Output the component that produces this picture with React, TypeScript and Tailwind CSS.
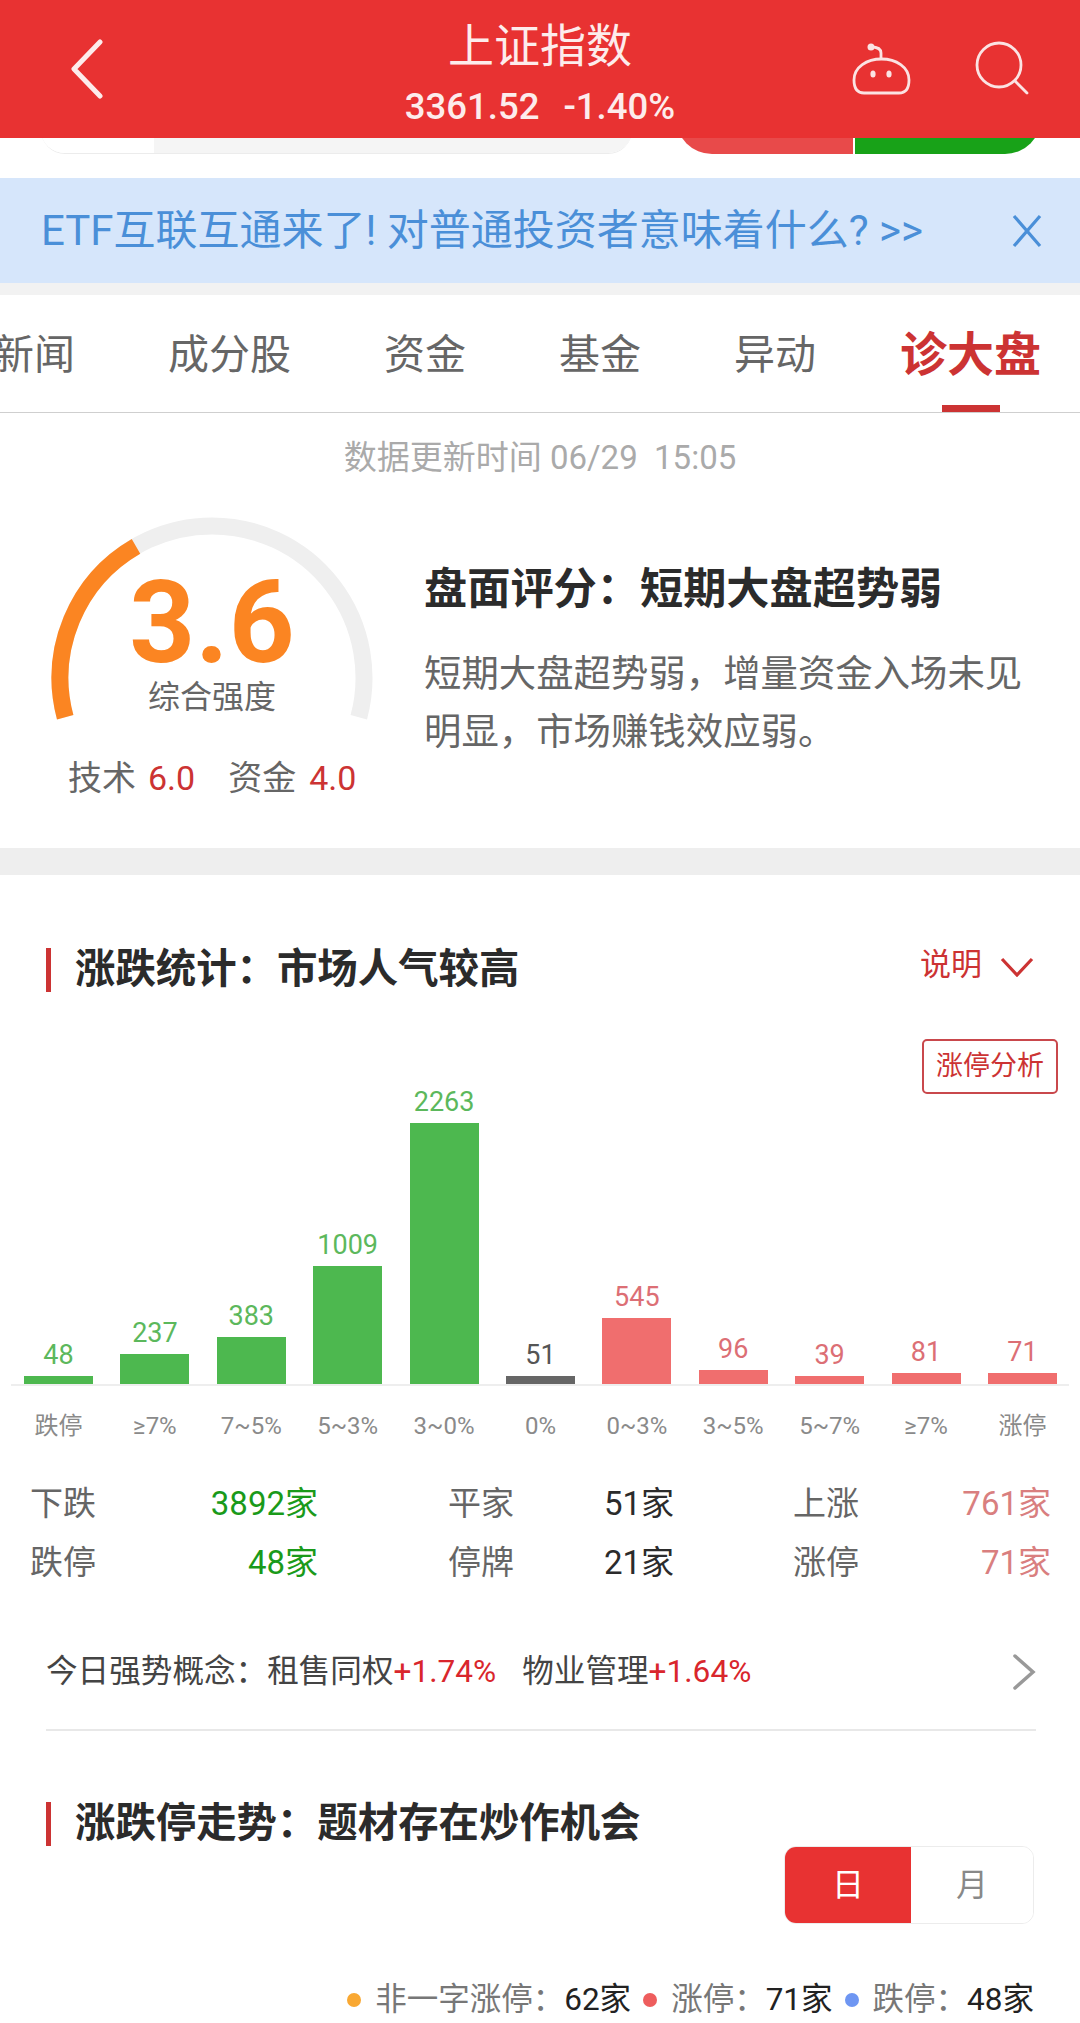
const tabs = ["新闻", "成分股", "资金", "基金", "异动"];

const bars = [
  { value: 48, height: 8, label: "跌停", color: "bg-[#4db84f]", text: "text-[#5cb85c]" },
  { value: 237, height: 30, label: "≥7%", color: "bg-[#4db84f]", text: "text-[#5cb85c]" },
  { value: 383, height: 47, label: "7~5%", color: "bg-[#4db84f]", text: "text-[#5cb85c]" },
  { value: 1009, height: 118, label: "5~3%", color: "bg-[#4db84f]", text: "text-[#5cb85c]" },
  { value: 2263, height: 261, label: "3~0%", color: "bg-[#4db84f]", text: "text-[#5cb85c]" },
  { value: 51, height: 8, label: "0%", color: "bg-[#666666]", text: "text-[#555555]" },
  { value: 545, height: 66, label: "0~3%", color: "bg-[#f06e6e]", text: "text-[#dc6f75]" },
  { value: 96, height: 14, label: "3~5%", color: "bg-[#f06e6e]", text: "text-[#dc6f75]" },
  { value: 39, height: 8, label: "5~7%", color: "bg-[#f06e6e]", text: "text-[#dc6f75]" },
  { value: 81, height: 11, label: "≥7%", color: "bg-[#f06e6e]", text: "text-[#dc6f75]" },
  { value: 71, height: 11, label: "涨停", color: "bg-[#f06e6e]", text: "text-[#dc6f75]" },
];

function Header() {
  return (
    <header className="relative z-10 grid h-[138px] grid-cols-[1fr_auto_1fr] items-center bg-[#e83232] text-[#fdecec]">
      <div className="pl-[69px]">
        <svg width="36" height="60" viewBox="0 0 36 60" fill="none" stroke="#fdecec" strokeWidth="5" strokeLinecap="round" strokeLinejoin="round">
          <path d="M31 3 L5 30 L31 57" />
        </svg>
      </div>
      <div className="flex flex-col items-center pt-[6px]">
        <div className="text-[46px] leading-[60px]">上证指数</div>
        <div className="mt-[10px] flex gap-[24px] text-[36.5px] font-medium leading-[42px]">
          <span>3361.52</span>
          <span>-1.40%</span>
        </div>
      </div>
      <div className="flex items-center justify-end gap-[61px] pr-[50px]">
        <svg width="64" height="60" viewBox="0 0 64 60" fill="none" stroke="#fbe3e3" strokeWidth="2.8" strokeLinecap="round">
          <path d="M5 41 C5 28 18 20 32.5 20 C47 20 60 28 60 41 C60 50 56 54 50 54 H15 C9 54 5 50 5 41 Z" />
          <path d="M32 19 V14 C32 10 28 8 22 8" />
          <circle cx="22" cy="8" r="3.5" fill="#fbe3e3" stroke="none" />
          <ellipse cx="24" cy="35" rx="2.6" ry="3.6" fill="#fbe3e3" stroke="none" />
          <ellipse cx="40" cy="35" rx="2.6" ry="3.6" fill="#fbe3e3" stroke="none" />
        </svg>
        <svg width="56" height="56" viewBox="0 0 56 56" fill="none" stroke="#fbe3e3" strokeWidth="2.8" strokeLinecap="round">
          <circle cx="25" cy="24" r="22" />
          <path d="M41 40 L53 52" />
        </svg>
      </div>
    </header>
  );
}

// search bar and trade buttons scrolled mostly under the header
function SearchRemnant() {
  return (
    <div className="flex h-[40px] items-end bg-white pl-[41px]">
      <div className="mb-[24px] flex h-[60px] w-[591px] overflow-hidden rounded-b-[24px] border-b border-[#ececec]">
        <div className="w-[113px] bg-white" />
        <div className="flex-1 bg-[#f5f5f5]" />
      </div>
      <div className="mb-[24px] ml-[44px] flex h-[60px] w-[365px] overflow-hidden rounded-b-[36px]">
        <div className="w-[177px] bg-[#e84a4a]" />
        <div className="ml-[2px] flex-1 bg-[#18a218]" />
      </div>
    </div>
  );
}

function Banner() {
  return (
    <div className="flex h-[105px] items-center justify-between bg-[#d6e6fb] pl-[41px] pr-[38px]">
      <span className="text-[42px] text-[#4a8fd8]">ETF互联互通来了! 对普通投资者意味着什么? &gt;&gt;</span>
      <svg width="30" height="34" viewBox="0 0 30 34" fill="none" stroke="#4a8fd8" strokeWidth="3.2">
        <path d="M2 2 L28 32 M28 2 L2 32" />
      </svg>
    </div>
  );
}

function Tabs() {
  return (
    <div className="mt-[12px] flex h-[118px] items-center gap-[93px] overflow-hidden border-b border-[#cfcfcf] bg-white pt-[4px] text-[41px] text-[#666666]">
      <span className="-ml-[7px]">{tabs[0]}</span>
      {tabs.slice(1).map((t) => (
        <span key={t}>{t}</span>
      ))}
      <span className="relative -ml-[9px] text-[47px] font-bold text-[#cc3333]">
        诊大盘
        <span className="absolute -bottom-[21px] left-[42px] h-[7px] w-[58px] bg-[#cc3333]" />
      </span>
    </div>
  );
}

function Gauge() {
  return (
    <div className="relative h-[232px] w-[330px]">
      <svg width="330" height="232" viewBox="47 510 330 232" fill="none" strokeWidth="17">
        <path d="M65.2 717.3 A152 152 0 1 1 358.8 717.3" stroke="#efefef" />
        <path d="M65.2 717.3 A152 152 0 0 1 136 546.4" stroke="#fb8522" />
      </svg>
      <div className="absolute inset-x-0 top-[63px] text-center text-[115px] font-bold leading-[100px] text-[#fb8522]">3.6</div>
      <div className="absolute inset-x-0 top-[165px] text-center text-[32px] leading-[44px] text-[#666666]">综合强度</div>
    </div>
  );
}

function Score() {
  return (
    <section className="h-[435px] bg-white">
      <div className="pt-[26px] text-center text-[33px] leading-[38px] text-[#aaaaaa]">数据更新时间 06/29&nbsp;&nbsp;15:05</div>
      <div className="mt-[33px] flex pl-[47px]">
        <div>
          <Gauge />
          <div className="mt-[14px] flex pl-[21px] text-[34px] leading-[44px] text-[#666666]">
            <span>技术</span>
            <span className="ml-[12px] text-[#cc3333]">6.0</span>
            <span className="ml-[33px]">资金</span>
            <span className="ml-[13px] text-[#cc3333]">4.0</span>
          </div>
        </div>
        <div className="ml-[47px] w-[620px] pt-[52px]">
          <div className="text-[43.2px] font-bold leading-[56px] text-[#2b2b2b]">盘面评分：短期大盘超势弱</div>
          <div className="mt-[27px] text-[37.4px] leading-[58px] text-[#666666]">
            短期大盘超势弱，增量资金入场未见
            <br />
            明显，市场赚钱效应弱。
          </div>
        </div>
      </div>
    </section>
  );
}

function SectionTitle({ title }: { title: string }) {
  return (
    <div className="flex h-[44px] items-center border-l-[5px] border-[#cc3333] pl-[24px] text-[40.4px] font-bold text-[#2b2b2b]">
      {title}
    </div>
  );
}

function Chart() {
  return (
    <div>
      <div className="flex h-[290px] items-end gap-[27.4px] pl-[24px]">
        {bars.map((b) => (
          <div key={b.label + b.value} className="flex w-[69px] flex-col items-center">
            <span className={`mb-[3px] text-[27px] leading-[36px] ${b.text}`}>{b.value}</span>
            <div className={`w-full ${b.color}`} style={{ height: b.height }} />
          </div>
        ))}
      </div>
      <div className="ml-[11px] h-[2px] w-[1058px] bg-[#eeeeee]" />
      <div className="mt-[22px] flex h-[36px] items-center gap-[27.4px] pl-[24px]">
        {bars.map((b) => (
          <span key={b.label + b.value} className="w-[69px] text-center text-[24px] text-[#8a8a8a]">
            {b.label}
          </span>
        ))}
      </div>
    </div>
  );
}

function Stat({ label, value, className, color }: { label: string; value: string; className: string; color: string }) {
  return (
    <div className={`flex justify-between ${className}`}>
      <span className="text-[#666666]">{label}</span>
      <span className={color}>{value}</span>
    </div>
  );
}

function Stats() {
  return (
    <div className="mt-[30px] text-[33px] leading-[59px]">
      <div className="flex">
        <Stat label="下跌" value="3892家" className="ml-[30px] w-[288px]" color="text-[#1a9a1a]" />
        <Stat label="平家" value="51家" className="ml-[130px] w-[226px]" color="text-[#2b2b2b]" />
        <Stat label="上涨" value="761家" className="ml-[119px] w-[258px]" color="text-[#d97f7f]" />
      </div>
      <div className="flex">
        <Stat label="跌停" value="48家" className="ml-[30px] w-[288px]" color="text-[#1a9a1a]" />
        <Stat label="停牌" value="21家" className="ml-[130px] w-[226px]" color="text-[#2b2b2b]" />
        <Stat label="涨停" value="71家" className="ml-[119px] w-[258px]" color="text-[#d97f7f]" />
      </div>
    </div>
  );
}

function Concepts() {
  return (
    <div className="ml-[46px] mr-[44px] mt-[23px] flex h-[116px] items-center justify-between border-b-2 border-[#e8e8e8] text-[31.6px] text-[#444444]">
      <div className="flex">
        <span>今日强势概念：租售同权</span>
        <span className="text-[#d9262c]">+1.74%</span>
        <span className="ml-[26px]">物业管理</span>
        <span className="text-[#d9262c]">+1.64%</span>
      </div>
      <svg width="24" height="38" viewBox="0 0 24 38" fill="none" stroke="#999999" strokeWidth="3.5" strokeLinecap="round">
        <path d="M3 3 L21 19 L3 35" />
      </svg>
    </div>
  );
}

function Legend() {
  const items = [
    { dot: "bg-[#f9a832]", label: "非一字涨停：", value: "62家" },
    { dot: "bg-[#ee5d5d]", label: "涨停：", value: "71家" },
    { dot: "bg-[#6e96f2]", label: "跌停：", value: "48家" },
  ];
  return (
    <div className="mt-[56px] flex items-center justify-end gap-[12px] pr-[46px] text-[31.5px] leading-[40px]">
      {items.map((it) => (
        <div key={it.label} className="flex items-center">
          <span className={`mr-[14px] h-[14px] w-[14px] rounded-full ${it.dot}`} />
          <span className="text-[#777777]">{it.label}</span>
          <span className="text-[#222222]">{it.value}</span>
        </div>
      ))}
    </div>
  );
}

function Market() {
  return (
    <section className="bg-white pb-[60px] pt-[73px]">
      <div className="flex items-center justify-between pl-[46px] pr-[46px]">
        <SectionTitle title="涨跌统计：市场人气较高" />
        <div className="flex h-[44px] items-center pb-[10px] text-[31px] text-[#cc3333]">
          说明
          <svg className="ml-[18px] mt-[4px]" width="34" height="20" viewBox="0 0 34 20" fill="none" stroke="#cc3333" strokeWidth="3.2">
            <path d="M2 2 L17 18 L32 2" />
          </svg>
        </div>
      </div>
      <div className="mt-[47px] flex justify-end pr-[22px]">
        <div className="flex h-[55px] w-[136px] items-center justify-center rounded-[5px] border-2 border-[#c9484c] text-[27px] text-[#cc3333]">
          涨停分析
        </div>
      </div>
      <Chart />
      <Stats />
      <Concepts />
      <div className="mt-[71px] pl-[46px]">
        <SectionTitle title="涨跌停走势：题材存在炒作机会" />
      </div>
      <div className="ml-auto mr-[46px] flex h-[78px] w-[250px] overflow-hidden rounded-[12px] border border-[#ececec] text-[32px]">
        <div className="flex w-[126px] items-center justify-center bg-[#e83232] text-white">日</div>
        <div className="flex flex-1 items-center justify-center bg-white text-[#888888]">月</div>
      </div>
      <Legend />
    </section>
  );
}

export default function App() {
  return (
    <div className="h-[2023px] w-[1080px] overflow-hidden bg-[#f2f2f2] [font-family:Roboto,'Noto_Sans_CJK_SC',sans-serif]">
      <Header />
      <SearchRemnant />
      <Banner />
      <Tabs />
      <Score />
      <div className="h-[27px] bg-[#eeeeee]" />
      <Market />
    </div>
  );
}
